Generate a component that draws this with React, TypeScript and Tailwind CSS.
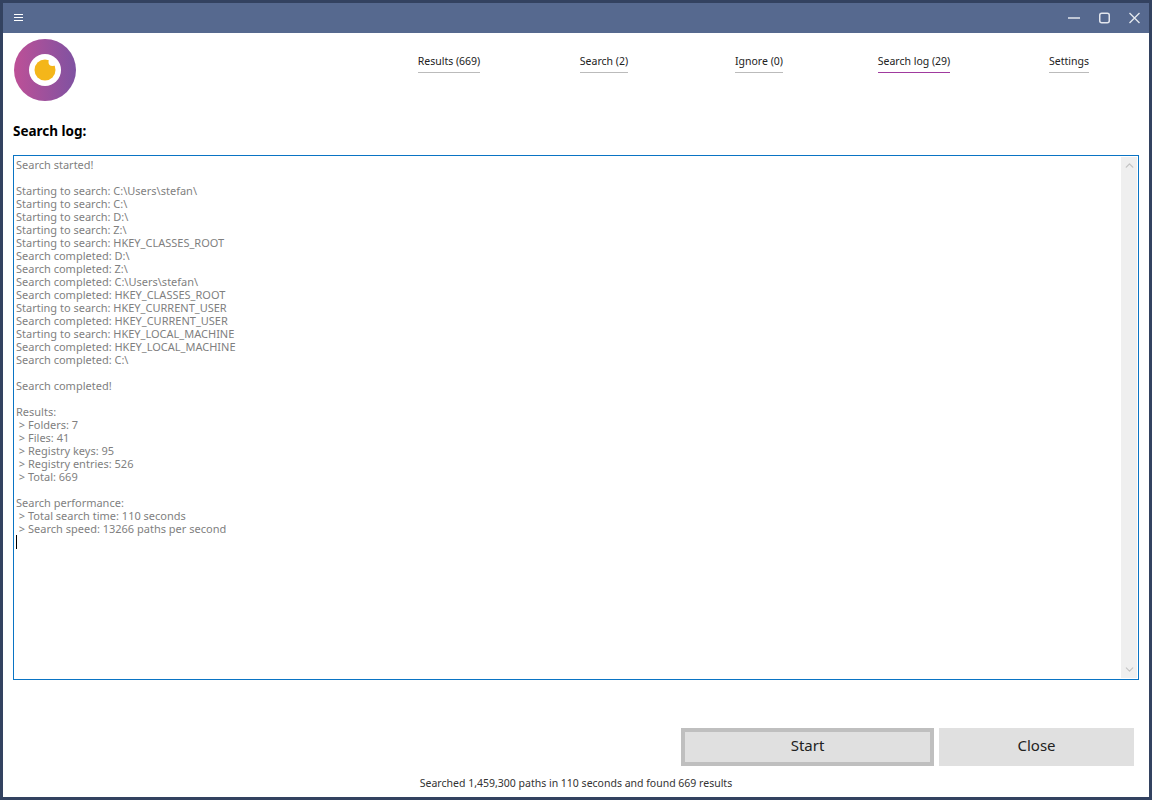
import { ChevronUp, ChevronDown } from 'lucide-react';

const tabs = [
  { label: 'Results (669)', active: false },
  { label: 'Search (2)', active: false },
  { label: 'Ignore (0)', active: false },
  { label: 'Search log (29)', active: true },
  { label: 'Settings', active: false },
];

const logText = `Search started!

Starting to search: C:\\Users\\stefan\\
Starting to search: C:\\
Starting to search: D:\\
Starting to search: Z:\\
Starting to search: HKEY_CLASSES_ROOT
Search completed: D:\\
Search completed: Z:\\
Search completed: C:\\Users\\stefan\\
Search completed: HKEY_CLASSES_ROOT
Starting to search: HKEY_CURRENT_USER
Search completed: HKEY_CURRENT_USER
Starting to search: HKEY_LOCAL_MACHINE
Search completed: HKEY_LOCAL_MACHINE
Search completed: C:\\

Search completed!

Results:
 > Folders: 7
 > Files: 41
 > Registry keys: 95
 > Registry entries: 526
 > Total: 669

Search performance:
 > Total search time: 110 seconds
 > Search speed: 13266 paths per second`;

function Logo() {
  return (
    <svg width="64" height="64" viewBox="0 0 64 64">
      <defs>
        <linearGradient id="logoGrad" x1="0" y1="0" x2="1" y2="0">
          <stop offset="0" stopColor="#bd5097" />
          <stop offset="1" stopColor="#7f52a1" />
        </linearGradient>
      </defs>
      <circle cx="32" cy="32" r="31" fill="url(#logoGrad)" />
      <circle cx="32" cy="32" r="16" fill="#fff" />
      <circle cx="32" cy="32" r="10.5" fill="#f4b61a" />
      <circle cx="39.5" cy="24" r="4" fill="#fff" />
    </svg>
  );
}

export default function App() {
  return (
    <div className="flex h-[800px] w-[1152px] flex-col border-[3px] border-[#334260] bg-white font-['Noto_Sans',sans-serif] text-[10.5px] text-[#222]">
      {/* Title bar */}
      <div className="flex h-[30px] shrink-0 items-center justify-between bg-[#56698f] pl-[11px] pr-[9px] text-[#e3e6ed]">
        <svg width="9" height="8" viewBox="0 0 9 8" stroke="#fff" strokeWidth="1">
          <path d="M0 .5h9M0 3.5h9M0 6.5h9" />
        </svg>
        <div className="flex items-center gap-[19px]">
          <svg width="12" height="12" viewBox="0 0 12 12" stroke="currentColor" strokeWidth="1.5">
            <path d="M0 6h12" />
          </svg>
          <svg width="11" height="12" viewBox="0 0 11 12" fill="none" stroke="currentColor" strokeWidth="1.5">
            <rect x=".75" y="1.25" width="9.5" height="9.5" rx="2" />
          </svg>
          <svg width="11" height="12" viewBox="0 0 11 12" fill="none" stroke="currentColor" strokeWidth="1.4">
            <path d="M.5 1l10 10M10.500 1l-10 10" />
          </svg>
        </div>
      </div>

      {/* Logo and tabs */}
      <div className="flex h-[74px] shrink-0 pl-[10px]">
        <div className="pt-[5px]">
          <Logo />
        </div>
        <div className="ml-[294.5px] grid grid-cols-[repeat(5,155px)] pt-[20px]">
          {tabs.map((tab) => (
            <div key={tab.label} className="flex justify-center">
              <div
                className={`h-[20px] border-b leading-[16px] ${
                  tab.active ? 'border-[#a03a9e]' : 'border-[#bbbbbb]'
                }`}
              >
                {tab.label}
              </div>
            </div>
          ))}
        </div>
      </div>

      {/* Log panel */}
      <div className="flex min-h-0 flex-1 flex-col px-[10px]">
        <div className="mt-[15px] h-[18px] text-[13.5px] font-bold leading-[19px] text-black">Search log:</div>
        <div className="mt-[15px] flex h-[525px] border border-[#0a74c4] pl-[2px] pr-[1px]">
          <div className="flex-1 pt-[2px]">
            <pre className="font-['Noto_Sans',sans-serif] text-[11px] leading-[13px] text-[#7f7f7f]">{logText}</pre>
            <div className="h-[14px] w-px bg-black" />
          </div>
          <div className="my-[1px] flex w-[16px] flex-col items-center justify-between bg-[#efefef] py-[2px] text-[#c4c4c4]">
            <ChevronUp className="h-[13px] w-[13px]" strokeWidth={2.5} />
            <ChevronDown className="h-[13px] w-[13px]" strokeWidth={2} />
          </div>
        </div>

        {/* Buttons */}
        <div className="mt-[48px] flex justify-end gap-[5px] pr-[5px]">
          <button className="h-[38px] w-[253px] border-4 border-[#bfbfbf] bg-[#e0e0e0] pb-[4px] text-[15px] text-[#222]">Start</button>
          <button className="h-[38px] w-[195px] bg-[#e0e0e0] pb-[4px] text-[15px] text-[#222]">Close</button>
        </div>
        <div className="mt-[9px] text-center leading-[16px] text-[#333]">
          Searched 1,459,300 paths in 110 seconds and found 669 results
        </div>
      </div>
    </div>
  );
}
